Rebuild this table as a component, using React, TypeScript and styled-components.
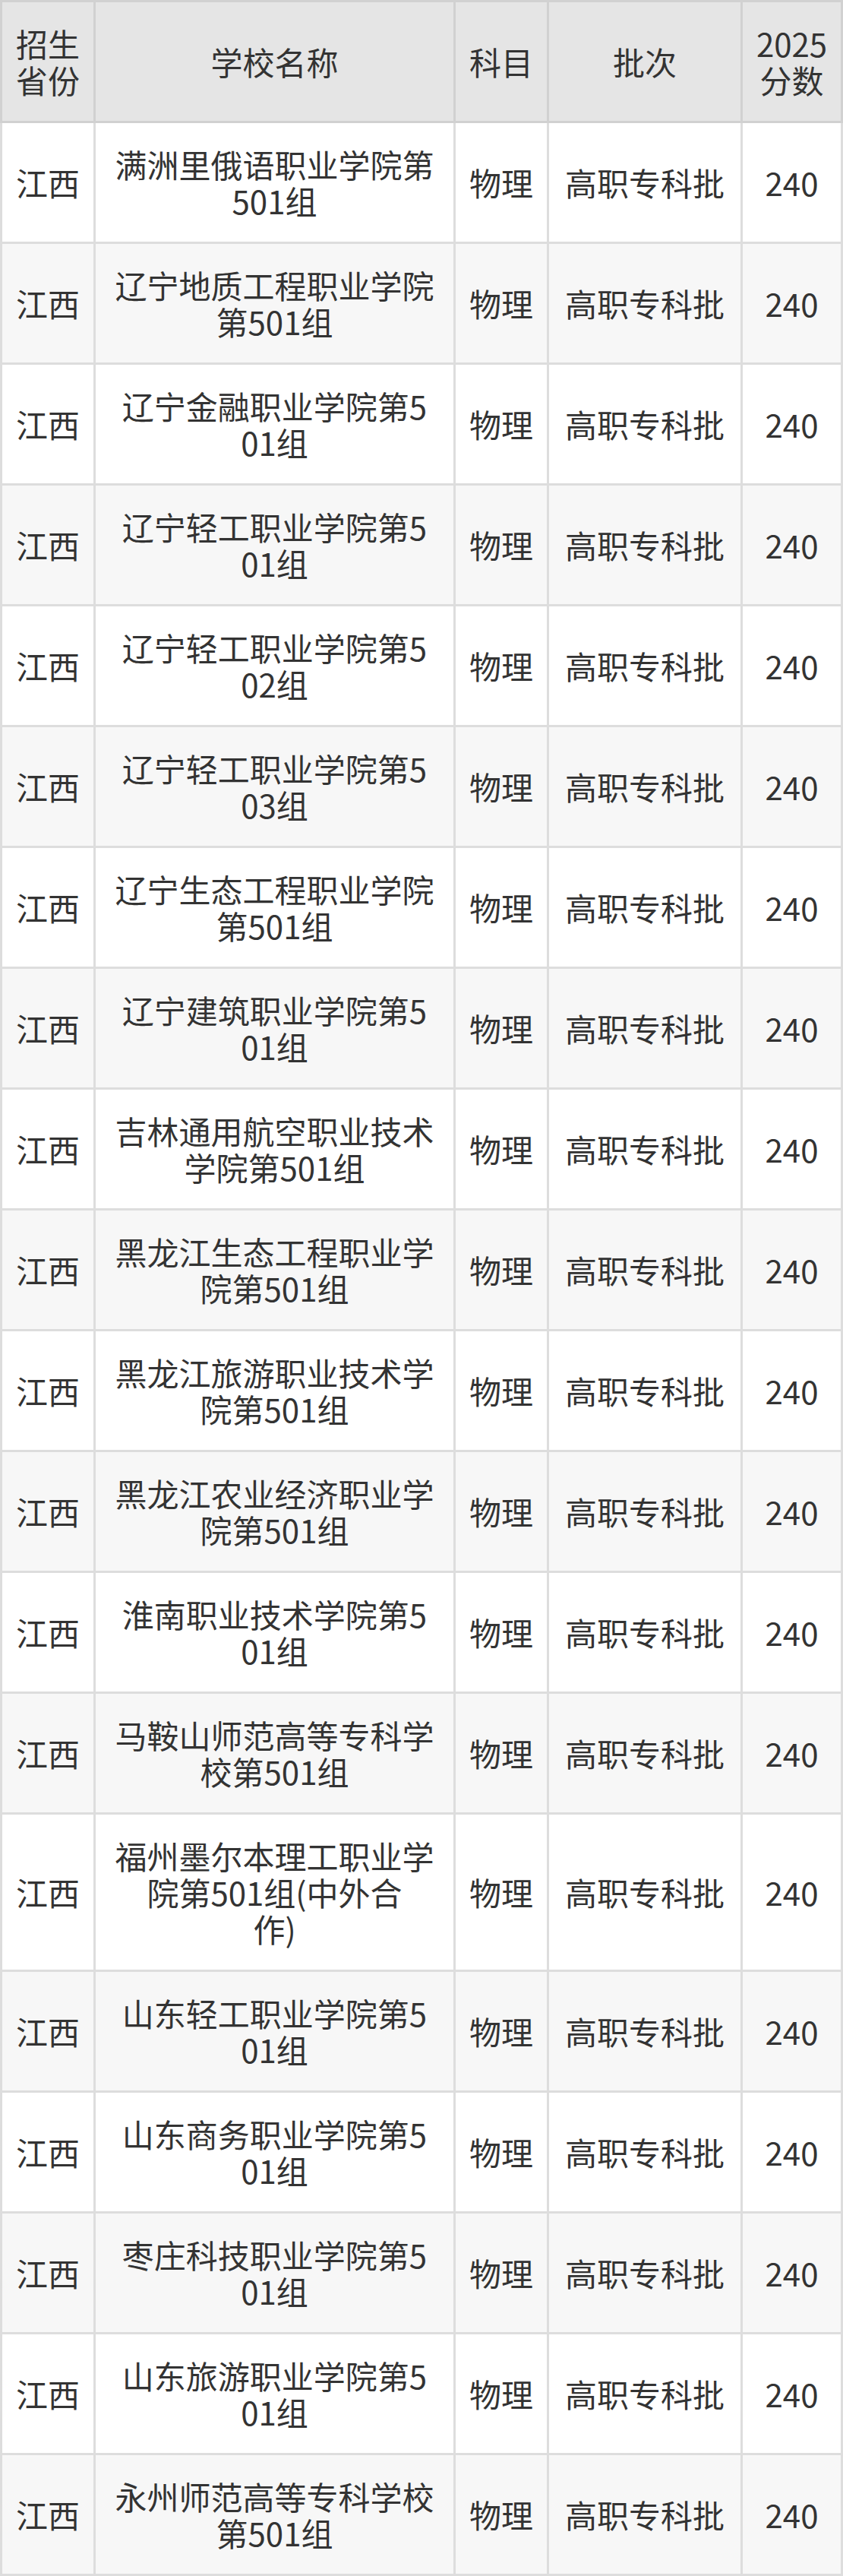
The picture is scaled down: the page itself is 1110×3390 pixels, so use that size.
import React from "react";
import styled, { createGlobalStyle } from "styled-components";

const GlobalStyle = createGlobalStyle`
  html, body {
    margin: 0;
    padding: 0;
    background: #ffffff;
  }
  body {
    font-family: "Noto Sans CJK SC", "Noto Sans", sans-serif;
    color: #333333;
  }
`;

const COLUMNS = "120px 471px 120px 252px 129px";

interface School {
  name: string; // lines split by \n, same breaks as the original table
}

const schools: School[] = [
  { name: "满洲里俄语职业学院第\n501组" },
  { name: "辽宁地质工程职业学院\n第501组" },
  { name: "辽宁金融职业学院第5\n01组" },
  { name: "辽宁轻工职业学院第5\n01组" },
  { name: "辽宁轻工职业学院第5\n02组" },
  { name: "辽宁轻工职业学院第5\n03组" },
  { name: "辽宁生态工程职业学院\n第501组" },
  { name: "辽宁建筑职业学院第5\n01组" },
  { name: "吉林通用航空职业技术\n学院第501组" },
  { name: "黑龙江生态工程职业学\n院第501组" },
  { name: "黑龙江旅游职业技术学\n院第501组" },
  { name: "黑龙江农业经济职业学\n院第501组" },
  { name: "淮南职业技术学院第5\n01组" },
  { name: "马鞍山师范高等专科学\n校第501组" },
  { name: "福州墨尔本理工职业学\n院第501组(中外合\n作)" },
  { name: "山东轻工职业学院第5\n01组" },
  { name: "山东商务职业学院第5\n01组" },
  { name: "枣庄科技职业学院第5\n01组" },
  { name: "山东旅游职业学院第5\n01组" },
  { name: "永州师范高等专科学校\n第501组" },
];

const Table = styled.div`
  width: 1110px;
  display: flex;
  flex-direction: column;
`;

const HeaderRow = styled.div`
  display: grid;
  grid-template-columns: ${COLUMNS};
  gap: 3px;
  padding: 3px;
  background: #d1d1d1;
`;

const Row = styled.div`
  display: grid;
  grid-template-columns: ${COLUMNS};
  gap: 3px;
  padding: 0 3px 3px;
  background: #dddddd;
`;

const Cell = styled.div<{ $head?: boolean; $alt?: boolean }>`
  display: flex;
  align-items: center;
  justify-content: center;
  text-align: center;
  padding: 30px 8px;
  font-size: 42px;
  line-height: 48px;
  white-space: pre-line;
  background: ${(p) => (p.$head ? "#e5e5e5" : p.$alt ? "#f7f7f7" : "#ffffff")};
  color: #333333;
`;

export default function App() {
  return (
    <>
      <GlobalStyle />
      <Table>
        <HeaderRow>
          <Cell $head>招生省份</Cell>
          <Cell $head>学校名称</Cell>
          <Cell $head>科目</Cell>
          <Cell $head>批次</Cell>
          <Cell $head>2025分数</Cell>
        </HeaderRow>
        {schools.map((s, i) => {
          const alt = i % 2 === 1;
          return (
            <Row key={i}>
              <Cell $alt={alt}>江西</Cell>
              <Cell $alt={alt}>{s.name}</Cell>
              <Cell $alt={alt}>物理</Cell>
              <Cell $alt={alt}>高职专科批</Cell>
              <Cell $alt={alt}>240</Cell>
            </Row>
          );
        })}
      </Table>
    </>
  );
}
